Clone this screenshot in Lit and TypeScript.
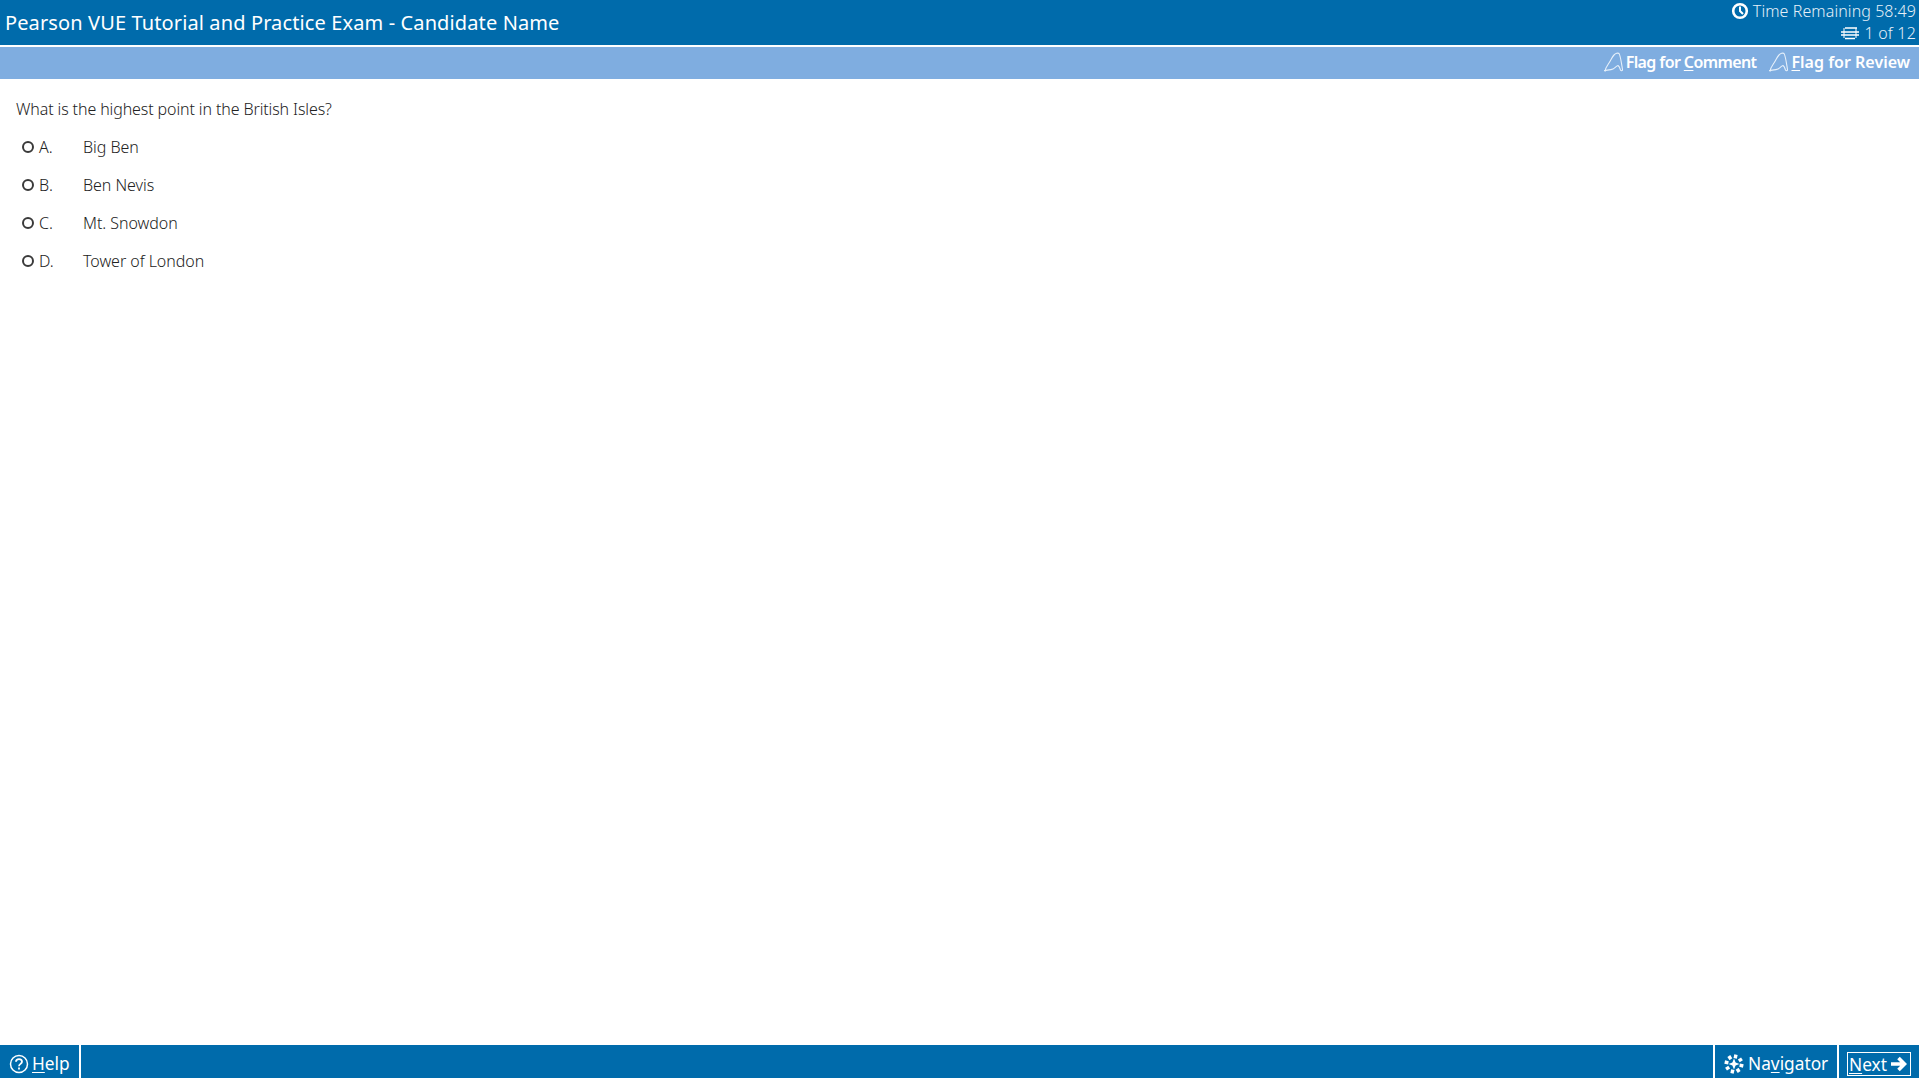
import { LitElement, html, css, svg } from "lit";
import { customElement } from "lit/decorators.js";

const flag = html`<svg class="flag" viewBox="0 0 20 20" fill="none" stroke="#e6f0fa" stroke-width="1.100"><path d="M1 19C1.500 16 3 14 5 11S8 5 10 3c1.500-1.500 4-2.500 5-1.500 1.500 2 2.500 10 3.500 16 .2 1.500-1.500 1.500-2 .5-.5-1.500-1-3.500-2.500-4.500-2 .5-3 2.500-5 3.500s-5 1-8.500 1.500z"/></svg>`;

const dots = [0, 45, 90, 135, 180, 225, 270, 315].map(
  (a) => svg`<rect x="8.300" y="0.500" width="3.400" height="3.800" fill="#fff" transform="rotate(${a + 12} 10 10)"/>`
);

@customElement("app-root")
export class AppRoot extends LitElement {
  static styles = css`
    :host { display: flex; flex-direction: column; height: 1078px; width: 1919px; overflow: hidden; background: #fff; font-family: "Noto Sans", sans-serif; color: #222; }
    svg { display: block; flex: none; }
    u { text-underline-offset: 2px; }
    .top { height: 45px; background: #006bab; color: #fff; display: flex; justify-content: space-between; }
    .title { font-size: 20px; line-height: 45px; padding-left: 5px; letter-spacing: 0.12px; }
    .status { display: flex; flex-direction: column; align-items: flex-end; padding: 0 3px 0 0; font-size: 16px; font-weight: 300; color: #e6f0f8; }
    .status div { display: flex; align-items: center; gap: 4px; height: 22px; }
    .time { letter-spacing: 0.08px; }
    .count { letter-spacing: 0.2px; }
    .rule { height: 2px; background: #fff; }
    .sub { height: 32px; box-sizing: border-box; padding: 0 9px 2px 0; background: #7fade0; display: flex; justify-content: flex-end; align-items: center; gap: 13px; color: #fff; font-size: 16px; font-weight: 600; }
    .tool { display: flex; align-items: center; gap: 2px; }
    .comment { letter-spacing: -0.6px; }
    .flag { width: 20px; height: 20px; }
    main { flex: 1; padding: 18px 16px 0; font-size: 16px; font-weight: 300; }
    .q { line-height: 24px; margin-bottom: 7px; letter-spacing: -0.11px; }
    .opt { display: flex; align-items: center; height: 38px; padding-left: 6px; letter-spacing: -0.05px; }
    .radio { width: 12px; height: 12px; box-sizing: border-box; border: 2px solid #3a3a3a; border-radius: 50%; flex: none; margin-top: -1px; }
    .letter { width: 49px; padding-left: 5px; box-sizing: border-box; flex: none; }
    footer { height: 33px; background: #006bab; color: #fff; display: flex; align-items: center; font-size: 17.300px; }
    .btn { height: 100%; display: flex; align-items: center; gap: 4px; box-sizing: border-box; padding-top: 4px; }
    .help { width: 81px; padding-left: 9px; gap: 3px; border-right: 2px solid #fff; }
    .spacer { flex: 1; }
    .nav { width: 124px; padding-left: 9px; border-left: 2px solid #fff; }
    .next { width: 82px; padding-left: 8px; border-left: 2px solid #fff; }
    .box { display: flex; align-items: center; gap: 4px; height: 24px; width: 64px; box-sizing: border-box; border: 1px solid #fff; padding-left: 1px; }
    .box span { padding-top: 2px; }
  `;

  render() {
    const opts = [["A.", "Big Ben"], ["B.", "Ben Nevis"], ["C.", "Mt. Snowdon"], ["D.", "Tower of London"]];
    return html`
      <header class="top">
        <div class="title">Pearson VUE Tutorial and Practice Exam - Candidate Name</div>
        <div class="status">
          <div>
            <svg width="18" height="18" viewBox="0 0 18 18" fill="none" stroke="#fff"><circle cx="9" cy="9" r="6.800" stroke-width="2.600"/><path d="M9 4.500V9l3 3" stroke-width="2"/></svg>
            <span class="time">Time Remaining 58:49</span>
          </div>
          <div>
            <svg width="20" height="16" viewBox="0 0 20 16" fill="none" stroke="#fff" stroke-width="1.500"><path d="M5 3h12M1 7h18M1 10h18M5 13.500h10"/><path d="M4 3v10M16 3v10" stroke-width="1"/></svg>
            <span class="count">1 of 12</span>
          </div>
        </div>
      </header>
      <div class="rule"></div>
      <div class="sub">
        <div class="tool">${flag}<span class="comment">Flag for <u>C</u>omment</span></div>
        <div class="tool">${flag}<span><u>F</u>lag for Review</span></div>
      </div>
      <main>
        <div class="q">What is the highest point in the British Isles?</div>
        ${opts.map(([l, t]) => html`<div class="opt"><span class="radio"></span><span class="letter">${l}</span><span>${t}</span></div>`)}
      </main>
      <footer>
        <div class="btn help">
          <svg width="20" height="20" viewBox="0 0 20 20" fill="none" stroke="#fff"><circle cx="10" cy="10" r="8.500" stroke-width="1.500"/><path d="M7 7.800c0-3.500 6-3.500 6 0 0 2-3 2.200-3 4.400" stroke-width="1.800"/><path d="M10 13.500v2" stroke-width="1.800"/></svg>
          <span><u>H</u>elp</span>
        </div>
        <div class="spacer"></div>
        <div class="btn nav">
          <svg width="20" height="20" viewBox="0 0 20 20">${dots}<path d="M10 4.500l1.600 3.900 3.900 1.600-3.900 1.600L10 15.500l-1.600-3.900L4.500 10l3.900-1.600z" fill="#fff"/></svg>
          <span>Na<u>v</u>igator</span>
        </div>
        <div class="btn next">
          <div class="box"><span><u>N</u>ext</span>
            <svg width="16" height="16" viewBox="0 0 16 16" fill="none" stroke="#fff" stroke-width="3.600"><path d="M0 8h13M7.500 2l6 6-6 6"/></svg>
          </div>
        </div>
      </footer>
    `;
  }
}
